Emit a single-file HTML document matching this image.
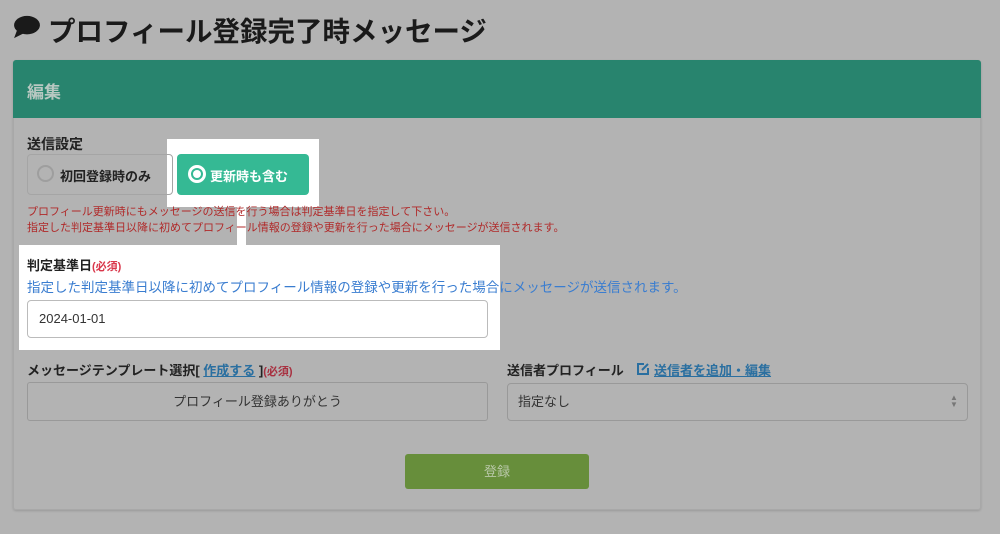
<!DOCTYPE html>
<html><head><meta charset="utf-8"><style>
body{margin:0;width:1000px;height:534px;background:#b3b3b3;font-family:"Liberation Sans","Noto Sans CJK JP",sans-serif;position:relative;overflow:hidden;color:#222}
.a{position:absolute;white-space:nowrap}
</style></head><body>
<svg class="a" style="left:13px;top:15px" width="28" height="24" viewBox="0 0 30 26"><ellipse cx="15" cy="11" rx="14" ry="10" fill="#1a1a1a"/><path d="M4 17 L1 25 L11 20Z" fill="#1a1a1a"/></svg>
<div class="a" style="left:48px;top:9px;font-size:27.5px;font-weight:bold;color:#1a1a1a">プロフィール登録完了時メッセージ</div>
<div class="a" style="left:13px;top:60px;width:968px;height:450px;border:1px solid #a8a8a8;border-radius:3px;box-sizing:border-box;box-shadow:0 1px 2px rgba(0,0,0,.15)"></div>
<div class="a" style="left:13px;top:60px;width:968px;height:58px;background:#28846e;border-radius:3px 3px 0 0"></div>
<div class="a" style="left:27px;top:78px;font-size:17px;font-weight:bold;color:#b8c8c2">編集</div>
<div class="a" style="left:27px;top:134px;font-size:14px;font-weight:bold">送信設定</div>
<div class="a" style="left:167px;top:139px;width:152px;height:68px;background:#fff"></div>
<div class="a" style="left:237px;top:200px;width:9px;height:50px;background:#fff"></div>
<div class="a" style="left:27px;top:154px;width:146px;height:41px;border:1px solid #a5a5a5;border-radius:4px;box-sizing:border-box"></div>
<div class="a" style="left:37px;top:165px;width:17px;height:17px;border:2px solid #9e9e9e;border-radius:50%;box-sizing:border-box"></div>
<div class="a" style="left:60px;top:166px;font-size:13px;font-weight:bold">初回登録時のみ</div>
<div class="a" style="left:177px;top:154px;width:132px;height:41px;background:#35b994;border-radius:4px"></div>
<div class="a" style="left:188px;top:165px;width:18px;height:18px;border:3px solid #fff;border-radius:50%;box-sizing:border-box"></div>
<div class="a" style="left:193px;top:170px;width:8px;height:8px;background:#fff;border-radius:50%"></div>
<div class="a" style="left:210px;top:166px;font-size:13px;font-weight:bold;color:#fff">更新時も含む</div>
<div class="a" style="left:27px;top:203px;font-size:11px;color:#b02a2a">プロフィール更新時にもメッセージの送信を行う場合は判定基準日を指定して下さい。</div>
<div class="a" style="left:27px;top:219px;font-size:11px;color:#b02a2a">指定した判定基準日以降に初めてプロフィール情報の登録や更新を行った場合にメッセージが送信されます。</div>
<div class="a" style="left:19px;top:245px;width:481px;height:105px;background:#fff"></div>
<div class="a" style="left:27px;top:255px;font-size:13px;font-weight:bold">判定基準日<span style="font-size:11px;color:#d9364a">(必須)</span></div>
<div class="a" style="left:27px;top:276px;font-size:13.5px;color:#3a7dd0">指定した判定基準日以降に初めてプロフィール情報の登録や更新を行った場合にメッセージが送信されます。</div>
<div class="a" style="left:27px;top:300px;width:461px;height:38px;border:1px solid #bbb;border-radius:4px;box-sizing:border-box;padding:10px 11px;font-size:13px;color:#333">2024-01-01</div>
<div class="a" style="left:27px;top:360px;font-size:13px;font-weight:bold">メッセージテンプレート選択[ <span style="color:#2a6fa0;text-decoration:underline">作成する</span> ]<span style="font-size:11px;color:#a83040">(必須)</span></div>
<div class="a" style="left:27px;top:382px;width:461px;height:39px;border:1px solid #999;border-radius:3px;box-sizing:border-box;text-align:center;line-height:37px;font-size:13px;color:#333">プロフィール登録ありがとう</div>
<div class="a" style="left:507px;top:360px;font-size:13px;font-weight:bold">送信者プロフィール</div>
<svg class="a" style="left:636px;top:362px" width="14" height="14" viewBox="0 0 14 14"><path d="M8 2H2v10h10V6" fill="none" stroke="#2a6fa0" stroke-width="2"/><path d="M6 8l6-6" stroke="#2a6fa0" stroke-width="2"/></svg>
<div class="a" style="left:654px;top:360px;font-size:13px;font-weight:bold;color:#2a6fa0;text-decoration:underline">送信者を追加・編集</div>
<div class="a" style="left:507px;top:383px;width:461px;height:38px;border:1px solid #999;border-radius:4px;box-sizing:border-box;padding:0 10px;line-height:36px;font-size:13px;color:#333">指定なし</div>
<div class="a" style="left:950px;top:394px;font-size:8px;line-height:7px;color:#777">▲<br>▼</div>
<div class="a" style="left:405px;top:454px;width:184px;height:35px;background:#678e3b;border-radius:3px;text-align:center;line-height:35px;font-size:13px;color:#b9c8a8">登録</div>
</body></html>
